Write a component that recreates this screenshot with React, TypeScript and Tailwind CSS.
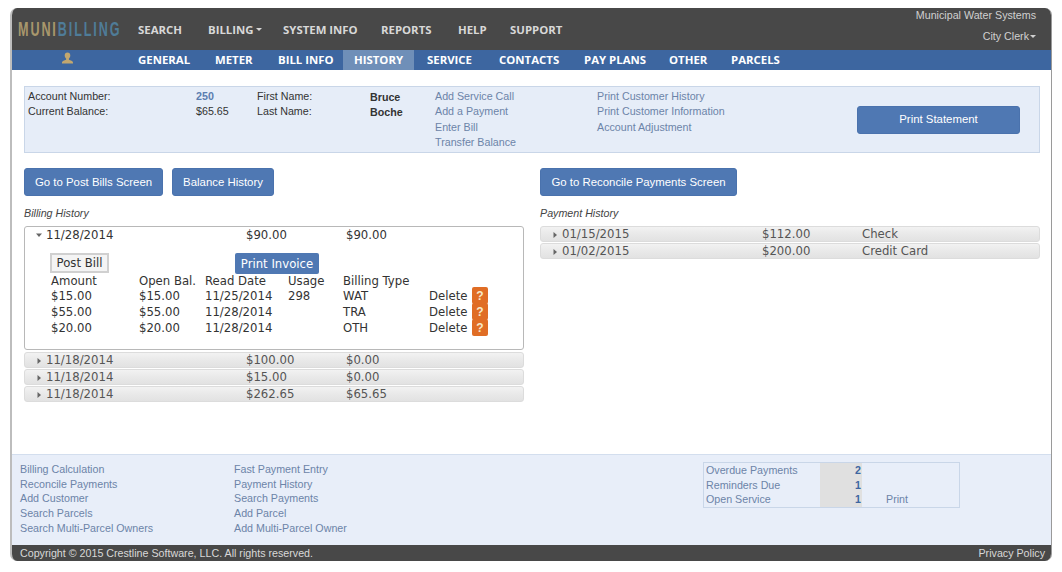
const topNav = [
  { label: "SEARCH", width: "w-[70px]" },
  { label: "BILLING", width: "w-[75px]", caret: true },
  { label: "SYSTEM INFO", width: "w-[98px]" },
  { label: "REPORTS", width: "w-[77px]" },
  { label: "HELP", width: "w-[52px]" },
  { label: "SUPPORT", width: "w-[70px]" },
];

const tabs = [
  { label: "GENERAL", width: "w-[77px]" },
  { label: "METER", width: "w-[63px]" },
  { label: "BILL INFO", width: "w-[65px]" },
  { label: "HISTORY", width: "w-[71px]", active: true },
  { label: "SERVICE", width: "w-[85px]" },
  { label: "CONTACTS", width: "w-[85px]" },
  { label: "PAY PLANS", width: "w-[85px]" },
  { label: "OTHER", width: "w-[62px]" },
  { label: "PARCELS", width: "w-[70px]" },
];

const billLines = [
  { amount: "$15.00", open: "$15.00", date: "11/25/2014", usage: "298", type: "WAT" },
  { amount: "$55.00", open: "$55.00", date: "11/28/2014", usage: "", type: "TRA" },
  { amount: "$20.00", open: "$20.00", date: "11/28/2014", usage: "", type: "OTH" },
];

const closedBills = [
  { date: "11/18/2014", amount: "$100.00", balance: "$0.00" },
  { date: "11/18/2014", amount: "$15.00", balance: "$0.00" },
  { date: "11/18/2014", amount: "$262.65", balance: "$65.65" },
];

const payments = [
  { date: "01/15/2015", amount: "$112.00", kind: "Check" },
  { date: "01/02/2015", amount: "$200.00", kind: "Credit Card" },
];

const footerLeft = ["Billing Calculation", "Reconcile Payments", "Add Customer", "Search Parcels", "Search Multi-Parcel Owners"];
const footerMid = ["Fast Payment Entry", "Payment History", "Search Payments", "Add Parcel", "Add Multi-Parcel Owner"];

function Caret({ open }: { open?: boolean }) {
  return (
    <svg width="6" height="6" viewBox="0 0 6 6" className="shrink-0 fill-[#666]">
      {open ? <path d="M0 1.500h6L3 5z" /> : <path d="M1.500 0v6L5 3z" />}
    </svg>
  );
}

function BlueButton({ children, className }: { children: string; className: string }) {
  return (
    <button className={`h-7 rounded-[3px] border border-[#4a72ad] bg-[#4f78b3] pt-[1px] text-[11.4px] text-white ${className}`}>
      {children}
    </button>
  );
}

function ClosedRow({ a, b, c }: { a: string; b: string; c: string }) {
  return (
    <div className="flex h-4 items-center rounded-[3px] border border-[#dcdcdc] bg-gradient-to-b from-[#f2f2f2] via-[#e9e9e9] to-[#e2e2e2] pl-[11px] pt-[1px] font-['DejaVu_Sans',sans-serif] text-[11.7px] text-[#555]">
      <Caret />
      <span className="ml-[4px] w-[200px]">{a}</span>
      <span className="w-[100px]">{b}</span>
      <span>{c}</span>
    </div>
  );
}

export default function App() {
  return (
    <div className="h-[572px] w-[1062px] bg-white px-[10px] pt-2 font-['Liberation_Sans',sans-serif] text-[10.7px] text-[#333]">
      <div className="flex h-[553px] flex-col overflow-hidden rounded-[7px] border-l-2 border-r border-l-[#bdbdbd] border-r-[#9a9a9a]">
        {/* Top bar */}
        <div className="flex h-[42px] bg-[#484848]">
          <div className="flex w-[124px] items-center overflow-hidden pl-[6px]">
            <span className="origin-left scale-x-[0.63] whitespace-nowrap text-[20px] font-bold tracking-[3px]">
              <span className="text-[#a8976c]">MUNI</span>
              <span className="text-[#4f7c98]">BILLING</span>
            </span>
          </div>
          <div className="flex flex-1 items-center pl-[2px] pt-[1px] font-['Open_Sans',sans-serif] text-[11.4px] font-bold text-[#d8d8d8]">
            {topNav.map((item) => (
              <span key={item.label} className={`flex items-center gap-[2px] ${item.width}`}>
                {item.label}
                {item.caret && (
                  <svg width="6" height="3" viewBox="0 0 6 3" className="fill-[#d8d8d8]">
                    <path d="M0 0h6L3 3z" />
                  </svg>
                )}
              </span>
            ))}
          </div>
          <div className="flex flex-col items-end pr-[15px] text-[#d0d0d0]">
            <span className="leading-[14px]">Municipal Water Systems</span>
            <span className="mt-[7px] flex items-center gap-[1px] leading-[14px]">
              City Clerk
              <svg width="6" height="3" viewBox="0 0 6 3" className="fill-[#d0d0d0]">
                <path d="M0 0h6L3 3z" />
              </svg>
            </span>
          </div>
        </div>

        {/* Tabs */}
        <div className="flex h-5 bg-[#3d66a0] font-['Open_Sans',sans-serif] text-[11.4px] font-bold text-white">
          <div className="flex w-[124px] items-center justify-center pb-[3px] pr-[14px]">
            <svg width="13" height="13" viewBox="0 0 13 13" className="fill-[#c2a76f]">
              <path d="M6.500 0.500c1.800 0 2.800 1.300 2.800 3 0 1.400-.7 2.500-1.400 3.100v1.200c1.600.5 4.100 1 4.100 2.700v1H1v-1c0-1.700 2.500-2.200 4.100-2.700V6.600C4.400 6 3.700 4.900 3.700 3.500c0-1.700 1-3 2.800-3z" />
            </svg>
          </div>
          <div className="flex pl-[2px]">
            {tabs.map((tab) =>
              tab.active ? (
                <span key={tab.label} className={`flex items-center justify-center bg-[#6f8fb8] ${tab.width}`}>
                  {tab.label}
                </span>
              ) : (
                <span key={tab.label} className={`flex items-center ${tab.width} ${tab.label === "SERVICE" ? "pl-[13px]" : ""}`}>
                  {tab.label}
                </span>
              ),
            )}
          </div>
        </div>

        {/* Main */}
        <div className="flex flex-1 flex-col bg-white pl-3 pr-[11px] pt-4">
          {/* Account panel */}
          <div className="flex h-[67px] border border-[#c9d6e8] bg-[#e6edf8] pl-[3px] pt-[2px] leading-[15.3px]">
            <div className="flex w-[168px] flex-col text-[#333]">
              <span>Account Number:</span>
              <span>Current Balance:</span>
            </div>
            <div className="flex w-[61px] flex-col">
              <span className="font-bold text-[#5b7db0]">250</span>
              <span>$65.65</span>
            </div>
            <div className="flex w-[113px] flex-col">
              <span>First Name:</span>
              <span>Last Name:</span>
            </div>
            <div className="flex w-[65px] flex-col pt-[1px] font-bold">
              <span>Bruce</span>
              <span>Boche</span>
            </div>
            <div className="flex w-[162px] flex-col text-[#6c84a8]">
              <span>Add Service Call</span>
              <span>Add a Payment</span>
              <span>Enter Bill</span>
              <span>Transfer Balance</span>
            </div>
            <div className="flex w-[260px] flex-col text-[#6c84a8]">
              <span>Print Customer History</span>
              <span>Print Customer Information</span>
              <span>Account Adjustment</span>
            </div>
            <div className="pt-[17px]">
              <BlueButton className="w-[163px] !pt-0">Print Statement</BlueButton>
            </div>
          </div>

          {/* History columns */}
          <div className="mt-[15px] flex gap-4">
            <div className="w-[500px]">
              <div className="flex gap-[9px]">
                <BlueButton className="w-[139px]">Go to Post Bills Screen</BlueButton>
                <BlueButton className="w-[102px]">Balance History</BlueButton>
              </div>
              <p className="mb-[6px] mt-[11px] italic leading-[13px] text-[#444]">Billing History</p>

              <div className="h-[124px] rounded-[3px] border border-[#b8b8b8] font-['DejaVu_Sans',sans-serif] text-[11.7px] leading-[16px] text-[#333]">
                <div className="flex h-[16px] items-center pl-[11px]">
                  <Caret open />
                  <span className="ml-[4px] w-[200px]">11/28/2014</span>
                  <span className="w-[100px]">$90.00</span>
                  <span>$90.00</span>
                </div>
                <div className="flex items-start pl-[25px] pt-[10px]">
                  <button className="h-[20px] w-[59px] border-2 border-[#d0d0d0] bg-[#f4f4f4] text-[11.7px] text-[#333]">
                    Post Bill
                  </button>
                  <button className="ml-[126px] h-[21px] w-[84px] rounded-[2px] bg-[#4f78b3] text-[11.7px] text-white">
                    Print Invoice
                  </button>
                </div>
                <div className="grid grid-cols-[88px_66px_83px_55px_86px_43px_23px] pl-[26px]">
                  <span className="h-[13px] leading-[15px]">Amount</span>
                  <span className="h-[13px] leading-[15px]">Open Bal.</span>
                  <span className="h-[13px] leading-[15px]">Read Date</span>
                  <span className="h-[13px] leading-[15px]">Usage</span>
                  <span className="col-span-3 h-[13px] leading-[15px]">Billing Type</span>
                  {billLines.map((line) => (
                    <div key={line.type} className="col-span-7 grid h-4 grid-cols-subgrid items-center">
                      <span>{line.amount}</span>
                      <span>{line.open}</span>
                      <span>{line.date}</span>
                      <span>{line.usage}</span>
                      <span>{line.type}</span>
                      <span>Delete</span>
                      <span className="flex h-[17px] w-[16px] items-center justify-center rounded-[2px] bg-[#e06d25] font-['Liberation_Sans',sans-serif] text-[12px] font-bold text-[#f6e8c8]">
                        ?
                      </span>
                    </div>
                  ))}
                </div>
              </div>

              <div className="mt-[2px] flex flex-col gap-px">
                {closedBills.map((bill) => (
                  <ClosedRow key={bill.amount} a={bill.date} b={bill.amount} c={bill.balance} />
                ))}
              </div>
            </div>

            <div className="w-[500px]">
              <div className="flex">
                <BlueButton className="w-[197px]">Go to Reconcile Payments Screen</BlueButton>
              </div>
              <p className="mb-[6px] mt-[11px] italic leading-[13px] text-[#444]">Payment History</p>
              <div className="flex flex-col gap-px">
                {payments.map((pay) => (
                  <ClosedRow key={pay.date} a={pay.date} b={pay.amount} c={pay.kind} />
                ))}
              </div>
            </div>
          </div>
        </div>

        {/* Bottom links */}
        <div className="flex h-[91px] border-t border-[#d3deee] bg-[#e8eef9] pl-[8px] pt-[7px] leading-[14.7px] text-[#6c84a8]">
          <div className="flex w-[214px] flex-col">
            {footerLeft.map((link) => (
              <span key={link}>{link}</span>
            ))}
          </div>
          <div className="flex w-[469px] flex-col">
            {footerMid.map((link) => (
              <span key={link}>{link}</span>
            ))}
          </div>
          <div className="h-[46px] w-[257px] border border-[#c9d6e8]">
            <div className="grid grid-cols-[116px_42px_1fr]">
              <span className="pl-[2px]">Overdue Payments</span>
              <span className="bg-[#e0e0e0] pr-[1px] text-right font-bold text-[#3d66a0]">2</span>
              <span />
              <span className="pl-[2px]">Reminders Due</span>
              <span className="bg-[#e0e0e0] pr-[1px] text-right font-bold text-[#3d66a0]">1</span>
              <span />
              <span className="pl-[2px]">Open Service</span>
              <span className="bg-[#e0e0e0] pr-[1px] text-right font-bold text-[#3d66a0]">1</span>
              <span className="pl-[24px]">Print</span>
            </div>
          </div>
        </div>

        {/* Footer */}
        <div className="flex h-4 items-center justify-between bg-[#484848] pl-[8px] pr-[6px] text-[#d8d8d8]">
          <span>Copyright © 2015 Crestline Software, LLC. All rights reserved.</span>
          <span>Privacy Policy</span>
        </div>
      </div>
    </div>
  );
}
